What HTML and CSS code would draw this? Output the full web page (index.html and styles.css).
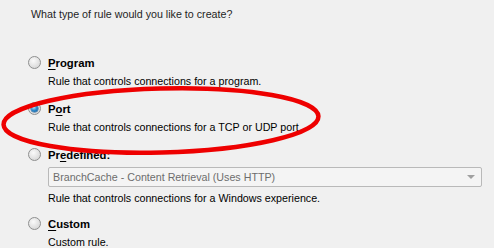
FILE: index.html
```html
<!DOCTYPE html>
<html>
<head>
<meta charset="utf-8">
<link rel="stylesheet" href="styles.css">
</head>
<body>
<div class="page">
  <p class="question">What type of rule would you like to create?</p>
  <div class="options">
    <div class="option">
      <div class="row"><span class="radio"></span><span class="label"><u>P</u>rogram</span></div>
      <p class="desc">Rule that controls connections for a program.</p>
    </div>
    <div class="option">
      <div class="row"><span class="radio checked"></span><span class="label">P<u>o</u>rt</span></div>
      <p class="desc">Rule that controls connections for a TCP or UDP port.</p>
    </div>
    <div class="option">
      <div class="row"><span class="radio"></span><span class="label">Pr<u>e</u>defined:</span></div>
      <div class="select"><span>BranchCache - Content Retrieval (Uses HTTP)</span><span class="arrow"></span></div>
      <p class="desc tight">Rule that controls connections for a Windows experience.</p>
    </div>
    <div class="option last">
      <div class="row"><span class="radio"></span><span class="label"><u>C</u>ustom</span></div>
      <p class="desc">Custom rule.</p>
    </div>
  </div>
  <svg class="mark" width="494" height="248" viewBox="0 0 494 248">
    <ellipse cx="161" cy="120.5" rx="157.5" ry="32" fill="none" stroke="#ee0000" stroke-width="4.5" transform="rotate(-1.5 161 120.5)"/>
  </svg>
</div>
</body>
</html>
```
FILE: styles.css
```css
html, body {
  margin: 0;
  padding: 0;
  background: #f0f0f0;
}
.page {
  position: relative;
  width: 494px;
  height: 248px;
  overflow: hidden;
  font-family: "Liberation Sans", Arial, sans-serif;
  font-size: 10.7px;
  color: #000;
}
p { margin: 0; }
.question {
  padding: 7px 0 0 31px;
  line-height: 15px;
  color: #1e1e1e;
}
.options {
  display: flex;
  flex-direction: column;
  gap: 12px;
  padding: 33px 0 0 28px;
}
.option.last { margin-top: -2px; }
.row {
  display: flex;
  align-items: center;
  gap: 7px;
  height: 15px;
}
.label {
  font-weight: bold;
  font-size: 11.3px;
}
.label u { text-decoration-thickness: 1px; text-underline-offset: 2px; }
.desc {
  margin: 4px 0 0 20px;
  line-height: 15px;
}
.desc.tight { margin-top: 4px; }
.radio {
  width: 13px;
  height: 13px;
  box-sizing: border-box;
  border-radius: 50%;
  border: 1px solid #8e8f8f;
  background: radial-gradient(circle at 40% 35%, #fafafa 0%, #e2e2e2 55%, #cfcfcf 100%);
  position: relative;
  flex: none;
}
.radio.checked::after {
  content: "";
  position: absolute;
  left: 2px;
  top: 2px;
  width: 7px;
  height: 7px;
  border-radius: 50%;
  background: radial-gradient(circle at 40% 35%, #b9e4fb 0%, #2f8fd0 45%, #0d4f8e 100%);
  box-shadow: 0 0 0 0.5px #1c5f9b;
}
.select {
  margin: 5px 0 0 20px;
  width: 434px;
  height: 20px;
  box-sizing: border-box;
  border: 1px solid #b9b9b9;
  border-radius: 2px;
  background: #f4f4f4;
  color: #6d6d6d;
  display: flex;
  align-items: center;
  justify-content: space-between;
  padding: 0 6px 0 4px;
}
.arrow {
  width: 0;
  height: 0;
  border-left: 4px solid transparent;
  border-right: 4px solid transparent;
  border-top: 4px solid #a0a0a0;
}
.mark {
  position: absolute;
  left: 0;
  top: 0;
  pointer-events: none;
}
```
